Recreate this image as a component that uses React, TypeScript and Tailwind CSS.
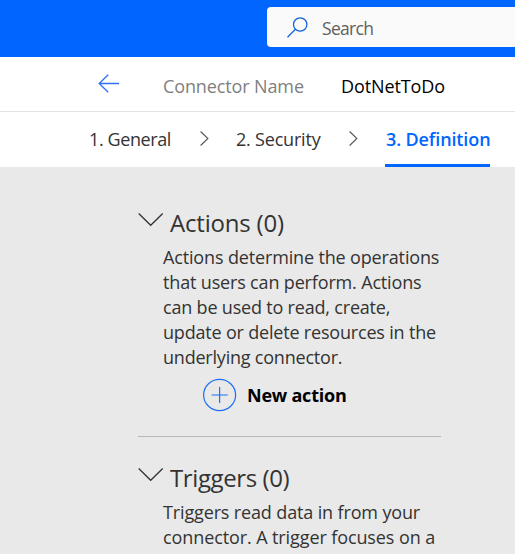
import type { ReactNode } from "react";

function ChevronRight({ className }: { className: string }) {
  return (
    <svg className={className} width="9" height="15" viewBox="0 0 9 15" fill="none" stroke="currentColor" strokeWidth="1.1">
      <path d="M.6.5 7.9 7.5.6 14.5" />
    </svg>
  );
}

function Section({ title, titleClass, children }: { title: string; titleClass: string; children: ReactNode }) {
  return (
    <section>
      <div className="flex h-[34px] items-start">
        <svg className="mt-[7px] shrink-0 text-[#333]" width="26" height="14" viewBox="0 0 26 14" fill="none" stroke="currentColor" strokeWidth="1.3">
          <path d="M.7.5 12.7 12.3 24.7.5" />
        </svg>
        <h2 className={`ml-[6px] text-[24px] leading-[34px] ${titleClass}`}>{title}</h2>
      </div>
      <div className="ml-[25px] mt-[5px] text-[18px] leading-[25px]">{children}</div>
    </section>
  );
}

export default function App() {
  return (
    <div className="flex h-[554px] w-[515px] flex-col overflow-hidden whitespace-nowrap bg-[#e9e9e9] font-['Open_Sans','Noto_Sans',sans-serif] text-[#333]">
      <header className="flex h-[57px] shrink-0 bg-[#0066ff] pl-[267px] pt-[7px]">
        <div className="flex h-10 w-[260px] shrink-0 items-center rounded-[4px] bg-[#fafafa] pl-5">
          <svg className="shrink-0 text-[#1160d8]" width="21" height="21" viewBox="0 0 21 21" fill="none" stroke="currentColor" strokeWidth="1.25">
            <circle cx="13.2" cy="7.5" r="6.7" />
            <path d="M8.4 12.3.5 20.3" />
          </svg>
          <span className="ml-[14px] mt-[2px] text-[17.5px] leading-6 tracking-[-0.7px] text-[#616161]">Search</span>
        </div>
      </header>
      <div className="flex h-[55px] shrink-0 items-center border-b border-[#e3e3e3] bg-white pl-[98px] text-[18px]">
        <svg className="-mt-[2px] shrink-0 text-[#2f70f5]" width="21" height="19" viewBox="0 0 21 19" fill="none" stroke="currentColor" strokeWidth="1.3">
          <path d="M10.2.8 1.2 9.5l9 8.7M1.2 9.5H21" />
        </svg>
        <span className="ml-[44px] mt-[5px] w-[178px] tracking-[-0.12px] text-[#7f7f7f]">Connector Name</span>
        <span className="mt-[5px] tracking-[-0.1px] text-black">DotNetToDo</span>
      </div>
      <nav className="flex h-[55px] shrink-0 bg-white pl-[89px] text-[18px] leading-[54px]">
        <span className="w-[111px] tracking-[-0.4px]">1. General</span>
        <ChevronRight className="mt-[19px] shrink-0 text-[#555]" />
        <span className="ml-[27px] w-[113px] tracking-[-0.2px]">2. Security</span>
        <ChevronRight className="mt-[19px] shrink-0 text-[#555]" />
        <span className="ml-[27px] h-[55px] w-[105px] shrink-0 border-b-[3px] border-[#0066ff] pl-px font-semibold tracking-[-0.12px] text-[#0066ff]">3. Definition</span>
      </nav>
      <main className="w-[441px] pl-[138px] pt-[39px]">
        <Section title="Actions (0)" titleClass="tracking-[-0.2px]">
          <p>
            <span className="block tracking-[-0.15px]">Actions determine the operations</span>
            <span className="block tracking-[-0.16px]">that users can perform. Actions</span>
            <span className="block tracking-[-0.19px]">can be used to read, create,</span>
            <span className="block tracking-[-0.19px]">update or delete resources in the</span>
            <span className="block tracking-[-0.21px]">underlying connector.</span>
          </p>
        </Section>
        <button className="ml-[65px] mt-[8px] flex h-[34px] items-center">
          <svg className="shrink-0 text-[#1b70f7]" width="34" height="34" viewBox="0 0 34 34" fill="none" stroke="currentColor" strokeWidth="1.2">
            <ellipse cx="16.6" cy="17" rx="16" ry="15.6" />
            <path d="M8.6 17h16.2M16.6 9v16" />
          </svg>
          <span className="ml-[10px] text-[18px] font-bold leading-[25px] tracking-[-0.22px] text-black">New action</span>
        </button>
        <hr className="mb-[24px] mt-[24px] border-[#b8b8b8]" />
        <Section title="Triggers (0)" titleClass="tracking-[-0.4px]">
          <p>
            <span className="block tracking-[-0.14px]">Triggers read data in from your</span>
            <span className="block tracking-[-0.1px]">connector. A trigger focuses on a</span>
          </p>
        </Section>
      </main>
    </div>
  );
}
